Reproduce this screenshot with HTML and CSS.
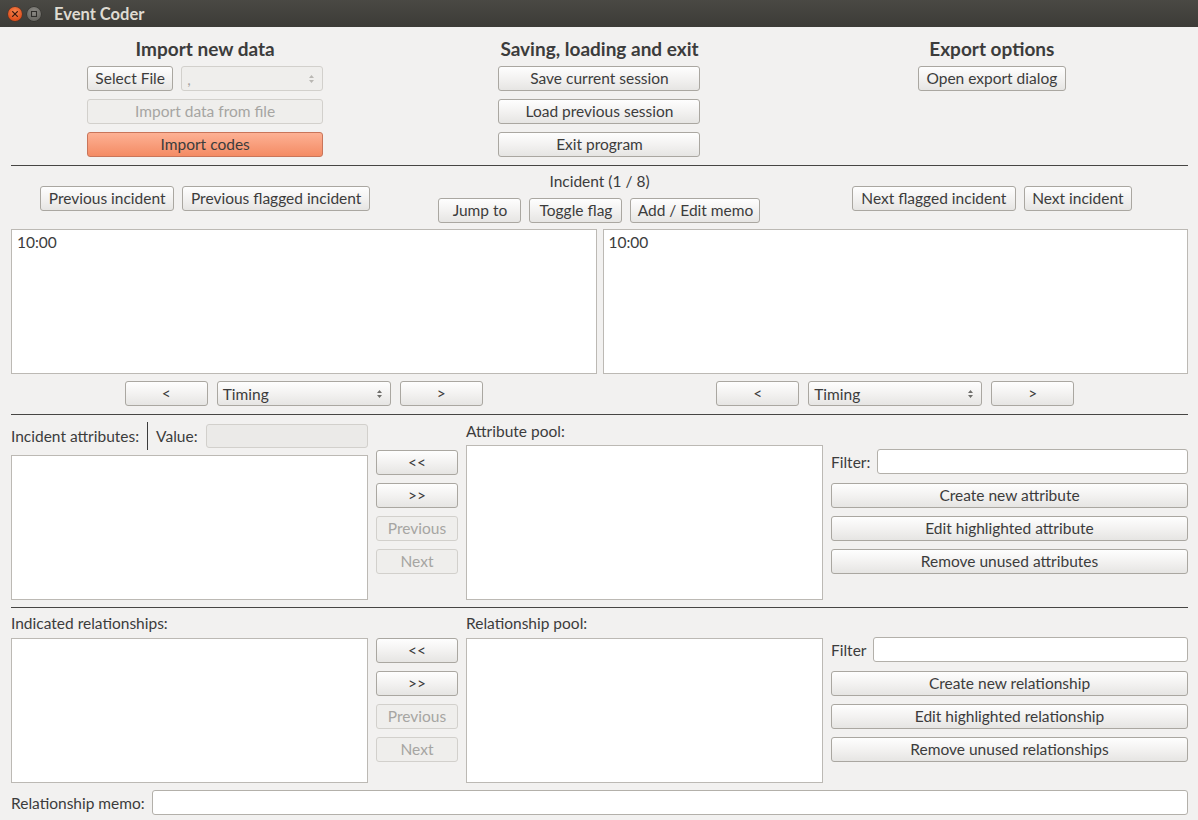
FILE: index.html
```html
<!DOCTYPE html>
<html>
<head>
<meta charset="utf-8">
<title>Event Coder</title>
<link rel="stylesheet" href="styles.css">
</head>
<body>
<div class="titlebar">
  <span class="wbtn close"><svg width="14" height="14" viewBox="0 0 14 14"><path d="M4.6 4.6 L9.4 9.4 M9.4 4.6 L4.6 9.4" stroke="#3b1a10" stroke-width="1.3" stroke-linecap="round"/></svg></span>
  <span class="wbtn minim"><svg width="14" height="14" viewBox="0 0 14 14"><rect x="4.5" y="4.5" width="5" height="5" fill="none" stroke="#2f2e2b" stroke-width="1.1"/></svg></span>
  <span class="wtitle">Event Coder</span>
</div>

<div class="content">
  <section class="top">
    <div class="col">
      <h2 class="heading">Import new data</h2>
      <div class="row">
        <button class="btn w-select">Select File</button>
        <div class="combo disabled w-sepcombo"><span>,</span><svg class="arrows" width="7" height="12" viewBox="0 0 7 12"><path d="M3.5 2 L6 5 L1 5 Z M3.5 10 L6 7 L1 7 Z" fill="#b9b7b3"/></svg></div>
      </div>
      <button class="btn disabled w-import">Import data from file</button>
      <button class="btn orange w-import">Import codes</button>
    </div>
    <div class="col">
      <h2 class="heading">Saving, loading and exit</h2>
      <button class="btn w-save">Save current session</button>
      <button class="btn w-save">Load previous session</button>
      <button class="btn w-save">Exit program</button>
    </div>
    <div class="col">
      <h2 class="heading">Export options</h2>
      <button class="btn w-export">Open export dialog</button>
    </div>
  </section>

  <div class="sep"></div>

  <section class="nav">
    <div class="navgroup">
      <button class="btn w-prev">Previous incident</button>
      <button class="btn w-prevflag">Previous flagged incident</button>
    </div>
    <div class="navcenter">
      <div class="incident-label">Incident (1 / 8)</div>
      <div class="navgroup">
        <button class="btn w-jump">Jump to</button>
        <button class="btn w-toggle">Toggle flag</button>
        <button class="btn w-memo">Add / Edit memo</button>
      </div>
    </div>
    <div class="navgroup">
      <button class="btn w-nextflag">Next flagged incident</button>
      <button class="btn w-next">Next incident</button>
    </div>
  </section>

  <section class="panes">
    <div class="pane">
      <div class="textbox">10:00</div>
      <div class="pane-controls">
        <button class="btn w-arrow">&lt;</button>
        <div class="combo w-timing"><span>Timing</span><svg class="arrows" width="7" height="12" viewBox="0 0 7 12"><path d="M3.5 2 L6 5 L1 5 Z M3.5 10 L6 7 L1 7 Z" fill="#6f6e6b"/></svg></div>
        <button class="btn w-arrow">&gt;</button>
      </div>
    </div>
    <div class="pane">
      <div class="textbox">10:00</div>
      <div class="pane-controls">
        <button class="btn w-arrow">&lt;</button>
        <div class="combo w-timing"><span>Timing</span><svg class="arrows" width="7" height="12" viewBox="0 0 7 12"><path d="M3.5 2 L6 5 L1 5 Z M3.5 10 L6 7 L1 7 Z" fill="#6f6e6b"/></svg></div>
        <button class="btn w-arrow">&gt;</button>
      </div>
    </div>
  </section>

  <div class="sep sep-attr"></div>

  <section class="coding attr">
    <div class="listcol attr-left">
      <div class="attr-labelrow">
        <span>Incident attributes:</span>
        <span class="vline"></span>
        <span>Value:</span>
        <div class="input disabled value-input"></div>
      </div>
      <div class="listbox"></div>
    </div>
    <div class="movecol attr-move">
      <button class="btn">&lt;&lt;</button>
      <button class="btn">&gt;&gt;</button>
      <button class="btn disabled">Previous</button>
      <button class="btn disabled">Next</button>
    </div>
    <div class="listcol attr-pool">
      <div class="list-label">Attribute pool:</div>
      <div class="listbox"></div>
    </div>
    <div class="actioncol attr-actions">
      <div class="filterrow">
        <span>Filter:</span>
        <div class="input"></div>
      </div>
      <button class="btn">Create new attribute</button>
      <button class="btn">Edit highlighted attribute</button>
      <button class="btn">Remove unused attributes</button>
    </div>
  </section>

  <div class="sep"></div>

  <section class="coding rel">
    <div class="listcol rel-left">
      <div class="list-label">Indicated relationships:</div>
      <div class="listbox"></div>
    </div>
    <div class="movecol rel-move">
      <button class="btn">&lt;&lt;</button>
      <button class="btn">&gt;&gt;</button>
      <button class="btn disabled">Previous</button>
      <button class="btn disabled">Next</button>
    </div>
    <div class="listcol rel-pool">
      <div class="list-label">Relationship pool:</div>
      <div class="listbox"></div>
    </div>
    <div class="actioncol rel-actions">
      <div class="filterrow">
        <span>Filter</span>
        <div class="input"></div>
      </div>
      <button class="btn">Create new relationship</button>
      <button class="btn">Edit highlighted relationship</button>
      <button class="btn">Remove unused relationships</button>
    </div>
  </section>

  <div class="memorow">
    <span>Relationship memo:</span>
    <div class="input"></div>
  </div>
</div>
</body>
</html>
```

FILE: styles.css
```css
* { box-sizing: border-box; }

html, body {
  margin: 0;
  padding: 0;
}

body {
  width: 1198px;
  height: 820px;
  overflow: hidden;
  background: #f2f1f0;
  font-family: Lato, "Open Sans", sans-serif;
  font-size: 15.5px;
  color: #3c3c3c;
}

/* ---------- title bar ---------- */
.titlebar {
  height: 27px;
  background: linear-gradient(#4a4944, #3c3b37);
  display: flex;
  align-items: center;
  padding-left: 8px;
}
.wbtn {
  width: 14px;
  height: 14px;
  border-radius: 50%;
  display: flex;
  margin-right: 5px;
}
.wbtn.close {
  background: radial-gradient(circle at 50% 35%, #f7864f, #e0501d 70%);
  box-shadow: 0 0 0 0.5px #6b2a12;
}
.wbtn.minim {
  background: radial-gradient(circle at 50% 35%, #8f8d88, #6a6964 70%);
  box-shadow: 0 0 0 0.5px #2c2b28;
}
.wtitle {
  margin-left: 8px;
  font-weight: 700;
  font-size: 16.5px;
  color: #dfdbd2;
}

/* ---------- generic widgets ---------- */
.content {
  padding: 0 10px 0 11px;
}

.btn {
  height: 25px;
  border: 1px solid #aaa7a1;
  border-radius: 3px;
  background: linear-gradient(#fefefe, #f3f2f1 50%, #e6e5e3);
  color: #3c3c3c;
  font-family: inherit;
  font-size: 15.5px;
  padding: 0 6px;
  margin: 0;
  line-height: 23px;
  white-space: nowrap;
}
.btn.disabled {
  border-color: #d2d0cc;
  background: #efeeec;
  color: #a6a5a2;
}
.btn.orange {
  border-color: #c9755a;
  background: linear-gradient(#fdb194, #f48b64);
  color: #3c3c3c;
}

.combo {
  height: 25px;
  border: 1px solid #aaa7a1;
  border-radius: 3px;
  background: linear-gradient(#fefefe, #f3f2f1 50%, #e6e5e3);
  display: flex;
  align-items: center;
  justify-content: space-between;
  padding: 0 7px 0 5px;
}
.combo.disabled {
  border-color: #d2d0cc;
  background: #efeeec;
  color: #a6a5a2;
}

.input {
  height: 25px;
  border: 1px solid #b3b0aa;
  border-radius: 3px;
  background: #ffffff;
}
.input.disabled {
  border-color: #d2d0cc;
  background: #ebeae8;
}

.sep {
  height: 1px;
  background: #474644;
}

/* ---------- top ---------- */
.top {
  display: grid;
  grid-template-columns: repeat(3, 1fr);
  padding: 12px 0 8px;
}
.col {
  display: flex;
  flex-direction: column;
  align-items: center;
  gap: 8px;
}
.col:first-child {
  margin-right: 4px;
}
.heading {
  margin: 0 0 -1px;
  font-size: 19px;
  line-height: 20px;
  font-weight: 700;
  color: #3c3c3c;
}
.row {
  display: flex;
  gap: 8px;
}
.w-select { width: 86px; }
.w-sepcombo { width: 142px; }
.w-import { width: 236px; }
.w-save { width: 202px; }
.w-export { width: 148px; }

/* ---------- navigation ---------- */
.nav {
  display: grid;
  grid-template-columns: repeat(3, 1fr);
  align-items: center;
  padding-top: 7px;
}
.navgroup {
  display: flex;
  justify-content: center;
  gap: 8px;
}
.nav > .navgroup:first-child {
  margin-right: 4px;
}
.navcenter {
  display: flex;
  flex-direction: column;
  align-items: center;
  gap: 8px;
}
.incident-label {
  line-height: 17px;
}
.w-prev { width: 134px; }
.w-prevflag { width: 188px; }
.w-jump { width: 83px; }
.w-toggle { width: 93px; }
.w-memo { width: 130px; }
.w-nextflag { width: 164px; }
.w-next { width: 108px; }

/* ---------- panes ---------- */
.panes {
  display: grid;
  grid-template-columns: 1fr 1fr;
  gap: 6px;
  margin-top: 6px;
}
.textbox {
  height: 145px;
  background: #ffffff;
  border: 1px solid #bcb9b4;
  padding: 4px 5px;
  line-height: 17px;
}
.pane-controls {
  display: flex;
  justify-content: center;
  gap: 9px;
  margin-top: 7px;
}
.w-arrow { width: 83px; }
.w-timing { width: 174px; }

.sep-attr {
  margin-top: 8px;
}

/* ---------- coding sections ---------- */
.coding {
  display: grid;
  grid-template-columns: 1fr 82px 1fr 1fr;
  column-gap: 8px;
}
.attr {
  height: 192px;
  padding: 0 0 7px;
}
.rel {
  height: 182px;
  padding: 0 0 7px;
}
.listcol {
  display: flex;
  flex-direction: column;
}
.listbox {
  flex: 1;
  background: #ffffff;
  border: 1px solid #bcb9b4;
}
.list-label {
  line-height: 17px;
  margin-bottom: 5px;
}

.attr-left { padding-top: 7px; }
.attr-labelrow {
  height: 28px;
  display: flex;
  align-items: center;
  gap: 8px;
  margin-bottom: 5px;
}
.vline {
  width: 1px;
  height: 28px;
  background: #3c3c3c;
}
.value-input {
  flex: 1;
  height: 24px;
}
.attr-pool { padding-top: 8px; }

.movecol {
  display: flex;
  flex-direction: column;
  gap: 8px;
}
.movecol .btn { width: 82px; padding: 0; }
.attr-move { padding-top: 35px; }
.rel-move { padding-top: 30px; }

.actioncol {
  display: flex;
  flex-direction: column;
  gap: 8px;
}
.actioncol .btn { width: 100%; }
.filterrow {
  display: flex;
  align-items: center;
  gap: 7px;
  margin-bottom: 1px;
}
.filterrow .input { flex: 1; }
.attr-actions { padding-top: 34px; }

.rel-left, .rel-pool { padding-top: 7px; }
.rel-left .list-label, .rel-pool .list-label { margin-bottom: 6px; }
.rel-actions { padding-top: 29px; }

/* ---------- memo ---------- */
.memorow {
  display: flex;
  align-items: center;
  gap: 7px;
}
.memorow .input { flex: 1; }
```
